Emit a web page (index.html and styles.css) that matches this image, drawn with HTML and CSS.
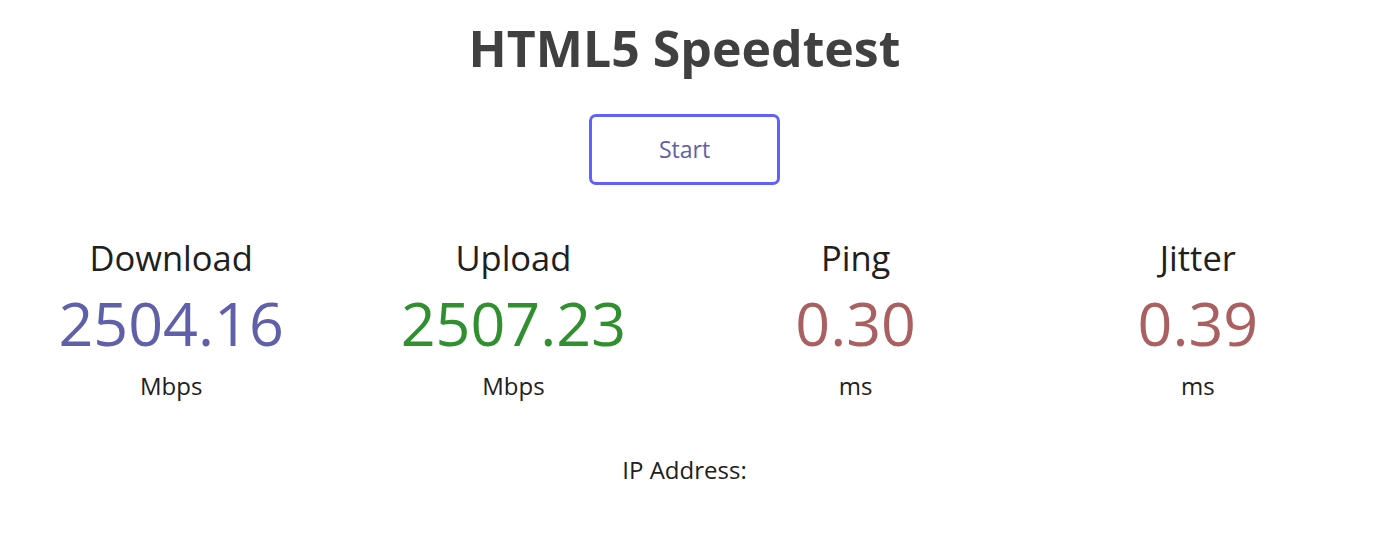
FILE: index.html
```html
<!DOCTYPE html>
<html>
<head>
<meta charset="utf-8">
<title>HTML5 Speedtest</title>
<link rel="stylesheet" href="styles.css">
</head>
<body>
<div class="page">
  <h1 class="title">HTML5 Speedtest</h1>
  <div class="start-row"><div class="start-btn">Start</div></div>
  <div class="tests">
    <div class="test-area">
      <div class="test-name">Download</div>
      <div class="meter meter-dl">2504.16</div>
      <div class="unit">Mbps</div>
    </div>
    <div class="test-area">
      <div class="test-name">Upload</div>
      <div class="meter meter-ul">2507.23</div>
      <div class="unit">Mbps</div>
    </div>
    <div class="test-area">
      <div class="test-name">Ping</div>
      <div class="meter meter-ping">0.30</div>
      <div class="unit">ms</div>
    </div>
    <div class="test-area">
      <div class="test-name">Jitter</div>
      <div class="meter meter-ping">0.39</div>
      <div class="unit">ms</div>
    </div>
  </div>
  <div class="ip">IP Address: <span class="ip-value"></span></div>
</div>
</body>
</html>
```

FILE: styles.css
```css
html, body {
  margin: 0;
  padding: 0;
  background: #ffffff;
}
body {
  font-family: "Open Sans", "Noto Sans", sans-serif;
  color: #202020;
  text-align: center;
}
.page {
  width: 1369px;
  display: flex;
  flex-direction: column;
  align-items: stretch;
}
.title {
  margin: 0;
  padding-top: 16px;
  font-size: 50px;
  line-height: 64px;
  font-weight: 700;
  color: #404040;
}
.start-row {
  display: flex;
  justify-content: center;
  padding-top: 34px;
}
.start-btn {
  box-sizing: border-box;
  width: 191px;
  height: 71px;
  border: 3px solid #6060ff;
  border-radius: 7px;
  color: #6060aa;
  font-size: 23px;
  line-height: 64px;
}
.tests {
  display: grid;
  grid-template-columns: repeat(4, 1fr);
  padding-top: 49px;
}
.test-area {
  display: flex;
  flex-direction: column;
  align-items: center;
}
.test-name {
  font-size: 34.5px;
  line-height: 47px;
}
.meter {
  font-size: 61px;
  line-height: 84px;
}
.meter-dl { color: #6060aa; }
.meter-ul { color: #309030; }
.meter-ping { color: #aa6060; }
.unit {
  padding-top: 4px;
  font-size: 24px;
  line-height: 33px;
}
.ip {
  padding-top: 51px;
  font-size: 24px;
  line-height: 33px;
}
```
